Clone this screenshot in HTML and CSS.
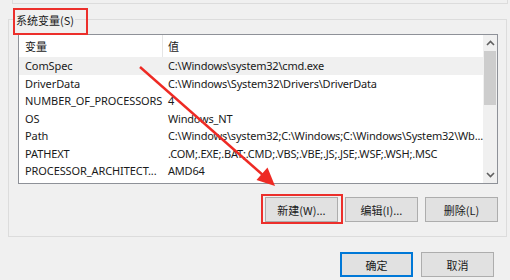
FILE: index.html
```html
<!DOCTYPE html>
<html>
<head>
<meta charset="utf-8">
<link rel="stylesheet" href="styles.css">
</head>
<body>
<div class="dialog">
  <div class="prev-group"></div>
  <div class="group">
    <span class="legend">系统变量(S)</span>
    <div class="listbox">
      <div class="list">
        <div class="row head"><span class="c1">变量</span><span class="c2">值</span></div>
        <div class="row sel"><span class="c1">ComSpec</span><span class="c2">C:\Windows\system32\cmd.exe</span></div>
        <div class="row"><span class="c1">DriverData</span><span class="c2">C:\Windows\System32\Drivers\DriverData</span></div>
        <div class="row"><span class="c1">NUMBER_OF_PROCESSORS</span><span class="c2">4</span></div>
        <div class="row"><span class="c1">OS</span><span class="c2">Windows_NT</span></div>
        <div class="row"><span class="c1">Path</span><span class="c2">C:\Windows\system32;C:\Windows;C:\Windows\System32\Wb...</span></div>
        <div class="row"><span class="c1">PATHEXT</span><span class="c2">.COM;.EXE;.BAT;.CMD;.VBS;.VBE;.JS;.JSE;.WSF;.WSH;.MSC</span></div>
        <div class="row"><span class="c1">PROCESSOR_ARCHITECT...</span><span class="c2">AMD64</span></div>
      </div>
      <div class="scrollbar">
        <div class="sb-btn"><svg width="9" height="6" viewBox="0 0 9 6"><path d="M1 5 L4.5 1.5 L8 5" fill="none" stroke="#606060" stroke-width="1.6"/></svg></div>
        <div class="thumb"></div>
        <div class="sb-fill"></div>
        <div class="sb-btn"><svg width="9" height="6" viewBox="0 0 9 6"><path d="M1 1 L4.5 4.5 L8 1" fill="none" stroke="#606060" stroke-width="1.6"/></svg></div>
      </div>
    </div>
    <div class="btn-row">
      <button class="btn">新建(W)...</button>
      <button class="btn">编辑(I)...</button>
      <button class="btn">删除(L)</button>
    </div>
  </div>
  <div class="footer">
    <button class="btn default">确定</button>
    <button class="btn">取消</button>
  </div>
</div>
<div class="mark mark-label"></div>
<div class="mark mark-new"></div>
<svg class="arrow" width="510" height="280" viewBox="0 0 510 280">
  <line x1="140" y1="67" x2="264" y2="176" stroke="#ee2a24" stroke-width="2.4"/>
  <polygon points="275,186 256.5,180 267.5,167.5" fill="#ee2a24"/>
</svg>
</body>
</html>
```

FILE: styles.css
```css
html, body {
  margin: 0;
  padding: 0;
}
body {
  width: 510px;
  height: 280px;
  background: #f0f0f0;
  font-family: "Noto Sans", "Noto Sans CJK SC", sans-serif;
  font-size: 11px;
  letter-spacing: -0.1px;
  color: #1a1a1a;
  position: relative;
  overflow: hidden;
}
.dialog {
  display: flex;
  flex-direction: column;
}
.prev-group {
  margin-left: 12px;
  width: 494px;
  height: 3px;
  border: 1px solid #dcdcdc;
  border-top: none;
}
.group {
  margin: 15px 0 0 8px;
  width: 497px;
  height: 216px;
  border: 1px solid #dcdcdc;
  display: flex;
  flex-direction: column;
}
.legend {
  align-self: flex-start;
  margin: -8px 0 0 6px;
  padding: 0 1px;
  height: 16px;
  line-height: 16px;
  background: #f0f0f0;
  font-family: "Noto Sans CJK SC", sans-serif;
  font-size: 11px;
  letter-spacing: 0;
  color: #1a1a1a;
}
.listbox {
  margin: 6px 0 0 9px;
  width: 478px;
  height: 148px;
  border: 1px solid #8e9198;
  background: #fff;
  display: flex;
}
.list {
  flex: 1;
  display: flex;
  flex-direction: column;
  overflow: hidden;
}
.row {
  display: flex;
  height: 17.5px;
  line-height: 17.5px;
  white-space: nowrap;
  flex: none;
}
.row.head {
  height: 22px;
  line-height: 22px;
}
.row.head .c1, .row.head .c2 {
  font-family: "Noto Sans CJK SC", sans-serif;
  letter-spacing: 0;
}
.row.head .c1 {
  border-right: 1px solid #e5e5e5;
  width: 137px;
}
.row.sel {
  background: #f0f0f0;
}
.c1 {
  width: 138px;
  padding-left: 6px;
  flex: none;
  overflow: hidden;
}
.c2 {
  padding-left: 5px;
  flex: none;
  letter-spacing: -0.2px;
}
.scrollbar {
  width: 14px;
  margin-left: auto;
  background: #f0f0f0;
  display: flex;
  flex-direction: column;
  flex: none;
}
.sb-btn {
  height: 16px;
  display: flex;
  align-items: center;
  justify-content: center;
}
.thumb {
  margin: 0 1px;
  height: 54px;
  background: #cdcdcd;
}
.sb-fill {
  flex: 1;
}
.btn-row {
  display: flex;
  gap: 7px;
  margin: 13px 0 0 256px;
}
.btn {
  width: 73px;
  height: 25px;
  border: 1px solid #adadad;
  background: #e1e1e1;
  font-family: "Noto Sans CJK SC", sans-serif;
  font-size: 11px;
  letter-spacing: 0;
  color: #1a1a1a;
  padding: 0;
  margin: 0;
}
.footer {
  display: flex;
  gap: 8px;
  margin: 15px 0 0 340px;
}
.btn.default {
  border: 1px solid #0078d7;
  box-shadow: inset 0 0 0 1px #0078d7;
}
.mark {
  position: absolute;
  border: 2px solid #ec2f2b;
}
.mark-label {
  left: 13px;
  top: 8px;
  width: 71px;
  height: 23px;
}
.mark-new {
  left: 261px;
  top: 194px;
  width: 78px;
  height: 26px;
}
.arrow {
  position: absolute;
  left: 0;
  top: 0;
}
```
